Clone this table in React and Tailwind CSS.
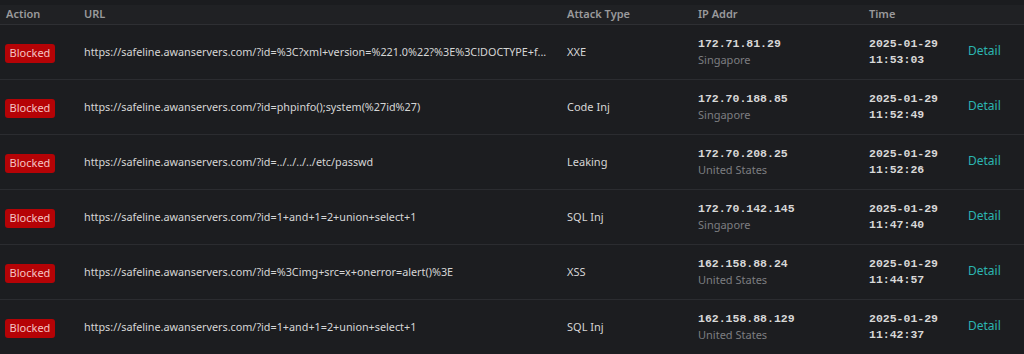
import React from 'react';

const rows = [
  {
    url: 'https://safeline.awanservers.com/?id=%3C?xml+version=%221.0%22?%3E%3C!DOCTYPE+f...',
    type: 'XXE',
    ip: '172.71.81.29',
    country: 'Singapore',
    date: '2025-01-29',
    time: '11:53:03',
  },
  {
    url: 'https://safeline.awanservers.com/?id=phpinfo();system(%27id%27)',
    type: 'Code Inj',
    ip: '172.70.188.85',
    country: 'Singapore',
    date: '2025-01-29',
    time: '11:52:49',
  },
  {
    url: 'https://safeline.awanservers.com/?id=../../../../etc/passwd',
    type: 'Leaking',
    ip: '172.70.208.25',
    country: 'United States',
    date: '2025-01-29',
    time: '11:52:26',
  },
  {
    url: 'https://safeline.awanservers.com/?id=1+and+1=2+union+select+1',
    type: 'SQL Inj',
    ip: '172.70.142.145',
    country: 'Singapore',
    date: '2025-01-29',
    time: '11:47:40',
  },
  {
    url: 'https://safeline.awanservers.com/?id=%3Cimg+src=x+onerror=alert()%3E',
    type: 'XSS',
    ip: '162.158.88.24',
    country: 'United States',
    date: '2025-01-29',
    time: '11:44:57',
  },
  {
    url: 'https://safeline.awanservers.com/?id=1+and+1=2+union+select+1',
    type: 'SQL Inj',
    ip: '162.158.88.129',
    country: 'United States',
    date: '2025-01-29',
    time: '11:42:37',
  },
];

const cols = 'grid grid-cols-[84px_483px_131px_171px_99px_1fr]';
const mono = { fontFamily: '"Liberation Mono", "DejaVu Sans Mono", monospace' };

export default function App() {
  return (
    <div
      className="w-[1024px] h-[354px] bg-[#1b1c1f] overflow-hidden pt-[5px]"
      style={{ fontFamily: '"Noto Sans", "Open Sans", sans-serif' }}
    >
      {/* Header */}
      <div className={`${cols} h-[20px] items-center bg-[#202124] border-b border-[#2e2f33] text-[11px] font-semibold text-[#9a9a9c]`}>
        <div className="pl-[6px]">Action</div>
        <div>URL</div>
        <div>Attack Type</div>
        <div>IP Addr</div>
        <div>Time</div>
        <div></div>
      </div>

      {rows.map((r, i) => (
        <div
          key={i}
          className={`${cols} h-[55px] items-center border-b border-[#2b2c30] bg-[#1c1d20]`}
        >
          <div className="pl-[5px] -mt-[2px]">
            <span className="inline-flex items-center justify-center h-[19px] w-[50px] rounded-[3px] bg-[#b50306] text-[11px] text-[#f4c4c4]">
              Blocked
            </span>
          </div>
          <div className="min-w-0 pr-2 truncate text-[10.8px] text-[#d6d6d6]">{r.url}</div>
          <div className="text-[11px] text-[#d6d6d6]">{r.type}</div>
          <div className="flex flex-col leading-[16px]">
            <span className="text-[11.5px] font-bold text-[#d8d8d8]" style={mono}>{r.ip}</span>
            <span className="text-[11px] text-[#7d7e80]">{r.country}</span>
          </div>
          <div className="flex flex-col leading-[16px] text-[11.5px] font-bold text-[#d8d8d8]" style={mono}>
            <span>{r.date}</span>
            <span>{r.time}</span>
          </div>
          <div className="text-[12px] text-[#2bb5b0] -mt-[2px]">Detail</div>
        </div>
      ))}
    </div>
  );
}
